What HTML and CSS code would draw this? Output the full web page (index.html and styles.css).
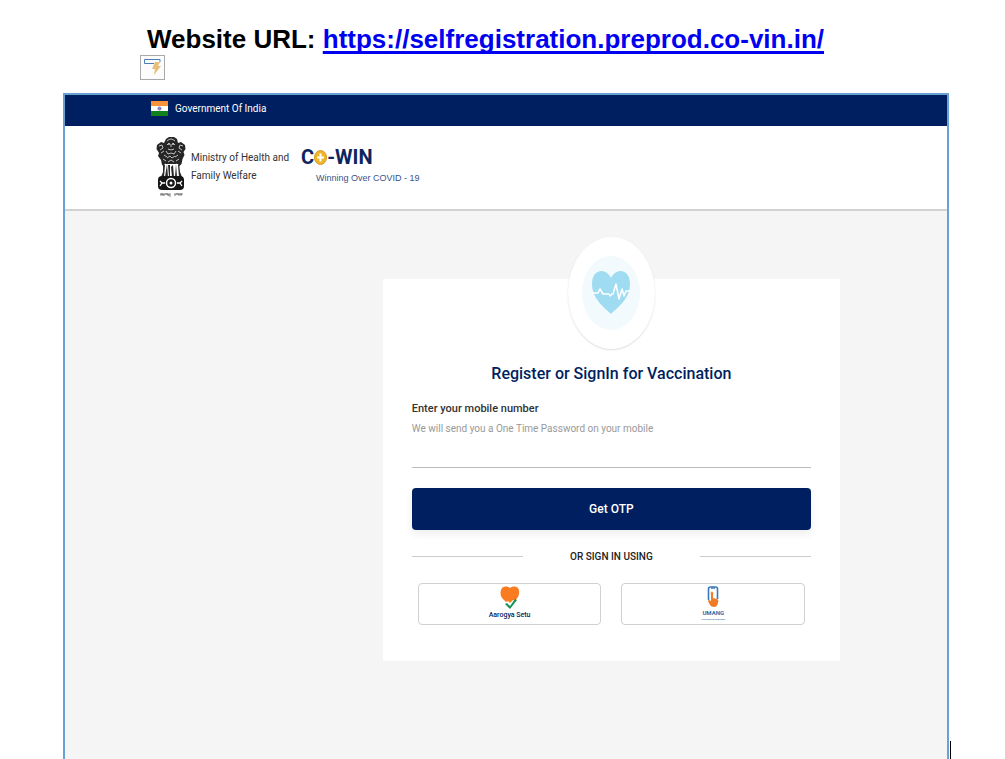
FILE: index.html
```
<!DOCTYPE html>
<html lang="en">

<head>
    <meta charset="UTF-8">
    <meta name="viewport" content="width=device-width, initial-scale=1.0">
    <title>Co-WIN Self Registration</title>
    <link rel="stylesheet" href="styles.css">
</head>

<body>

    <div class="doc-heading">
        <h1>Website URL: <a href="https://selfregistration.preprod.co-vin.in/">https://selfregistration.preprod.co-vin.in/</a></h1>
        <button class="autofit" type="button" aria-label="AutoFit options">
            <svg width="23" height="23" viewBox="0 0 23 23">
                <path d="M13 7.500H3.500V3.500H19V6" fill="none" stroke="#4a7ebb" />
                <path d="M14 6h5l-2 4h3l-7 9 1-6h-3z" fill="#e8bf78" />
            </svg>
        </button>
    </div>

    <div class="frame">
        <header>
            <div class="gov-bar">
                <svg class="flag" width="17" height="15" viewBox="0 0 17 15">
                    <rect width="17" height="5" fill="#f7933b" />
                    <rect y="5" width="17" height="5" fill="#fff" />
                    <rect y="10" width="17" height="5" fill="#138020" />
                    <circle cx="8.500" cy="7.500" r="1.600" fill="#8d8fc4" stroke="#4b4f9c" stroke-width=".6" />
                </svg>
                <span>Government Of India</span>
            </div>

            <div class="brand-bar">
                <svg class="emblem" width="30" height="62" viewBox="0 0 30 62">
                    <!-- three lions -->
                    <path d="M10 3l3-2h5l3 2 1 4 3-1 4 3 .5 4-2 3 1 3-2 4-1 5-3 3H9l-3-2-1-5-3-4 1-3L.5 13 1 9l4-3 3 1z" fill="#262626" />
                    <path d="M11 5q4-4 8 0M11 9q1-2 3-1m2 0q2-1 3 1M12 13q3 2 6 0M15 8v3M3 10l3-1 1 3-3 2m23-4-3-1-1 3 3 2M5 17l3-2m17 2-3-2M10 15l2 3 3-1 3 1 2-3M8 19l3 2m11-2-3 2M11 22l3-2 2 2 3-2M7 23l3 2m13-2-3 2M12 26l3-2 3 2M9 28l2 1m10-1-2 1" fill="none" stroke="#e4e4e4" stroke-width=".8" />
                    <circle cx="13" cy="8" r=".8" fill="#fff" />
                    <circle cx="17" cy="8" r=".8" fill="#fff" />
                    <!-- legs -->
                    <path d="M7 28h16l1 13H6z" fill="#fff" />
                    <path d="M7 27l2 2-1 12H5l2-5zM11 28l1 13H9zM14 29v12h-1l-1-12zM17 29l1 12h-2l-1-10zM20 28l1 13h-2zM23 27l-1 2 1 12h3l-2-5z" fill="#282828" />
                    <!-- abacus with the wheel -->
                    <rect x="2" y="40" width="26" height="14" rx="4" fill="#151515" />
                    <circle cx="15" cy="47" r="4.500" fill="none" stroke="#fff" stroke-width="1.500" />
                    <circle cx="15" cy="47" r="1.500" fill="#fff" />
                    <path d="M4 45l2 2-2 3m1-3h4m17-2-2 2 2 3m-1-3h-4" fill="none" stroke="#fff" stroke-width="1.300" />
                    <path d="M5 60v-2h2v2m1-2v2m1-2h3v2m1-2v2h2m4-2v2m1-2h3v2m1-2h3m-2 0v2M4 58h11m3 0h8" fill="none" stroke="#555" stroke-width=".7" />
                </svg>
                <p class="ministry">Ministry of Health and<br>Family Welfare</p>
                <div class="cowin">
                    <div class="cowin-name">C<svg width="13" height="15" viewBox="0 0 13 15" role="img" aria-label="o">
                            <ellipse cx="6.500" cy="7.500" rx="6" ry="7" fill="#eeb52c" stroke="#d79b20" />
                            <path d="M6.500 3.500v8M3 7.500h7" stroke="#fff" stroke-width="2" />
                        </svg>-WIN</div>
                    <div class="cowin-tag">Winning Over COVID - 19</div>
                </div>
            </div>
        </header>

        <main>
            <form class="card">
                <div class="badge">
                    <svg width="58" height="74" viewBox="0 0 58 74">
                        <ellipse cx="29" cy="37" rx="29" ry="37" fill="#f2fafd" />
                        <path d="M29 58C23 52 10 43 10 28c0-8 4-13 9.500-13 4 0 7.500 3 9.500 7 2-4 5.500-7 9.500-7C44 15 48 20 48 28c0 15-13 24-19 30z" fill="#a0dcf1" />
                        <path d="M10 37h6l2-4 3 5h6l1 2 2-2h1l3-10 3 15 3-10 2 7 2-5h4" fill="none" stroke="#fff" stroke-width="1.500" stroke-linejoin="round" />
                    </svg>
                </div>

                <h2>Register or SignIn for Vaccination</h2>

                <label for="mobile">Enter your mobile number</label>
                <p class="hint" id="hint">We will send you a One Time Password on your mobile</p>
                <input type="tel" id="mobile" aria-describedby="hint">

                <button class="otp" type="button">Get OTP</button>

                <div class="divider"><span>OR SIGN IN USING</span></div>

                <div class="providers">
                    <button class="provider" type="button">
                        <svg width="20" height="24" viewBox="0 0 20 24">
                            <path d="M10 2C12 0 16 0 18 2c2 3 1 7 0 9l-3 4-2-1-3 3-2-2-2 1-4-4C0 9 0 5 2 2c2-2 6-2 8 0z" fill="#f97d20" />
                            <path d="M5 18l2-1 3 3 5-7 2 1-7 9z" fill="#179257" />
                        </svg>
                        <span>Aarogya Setu</span>
                    </button>
                    <button class="provider umang" type="button">
                        <svg width="12" height="22" viewBox="0 0 12 22">
                            <path d="M1.500 14V3q0-2 2-2h5q2 0 2 2v10" fill="none" stroke="#3b78b8" stroke-width="1.600" />
                            <path d="M4 2h4" stroke="#3b78b8" stroke-width="1.500" />
                            <circle cx="5" cy="7" r="1.600" fill="#f9b183" />
                            <path d="M4 7q1-1.500 2 0v5l4 1q2 1 1 4-1 4-4 4-3 0-4-2l-2-4q0-1 1-1l2 1z" fill="#f17a25" />
                        </svg>
                        <span>UMANG</span>
                        <small>THE SPIRIT OF NEW INDIA</small>
                    </button>
                </div>
            </form>
        </main>
    </div>

    <div class="caret"></div>

</body>

</html>
```
FILE: styles.css
```
* {
    box-sizing: border-box;
}

body {
    position: relative;
    display: flex;
    flex-direction: column;
    min-height: 100vh;
    margin: 0;
    background-color: #fff;
    font-family: Roboto, Arial, sans-serif;
}

h1,
h2,
p {
    margin: 0;
}

button {
    font-family: inherit;
    cursor: pointer;
}

svg {
    display: block;
}

/* Document heading */
.doc-heading {
    padding: 24px 0 13px 140px;
}

h1 {
    padding-left: 7px;
    font: bold 26px/30px "Liberation Sans", Arial, sans-serif;
    color: #000;
}

h1 a {
    color: #0000f0;
    text-decoration-thickness: 3px;
    text-underline-offset: 3px;
    text-decoration-skip-ink: none;
}

.autofit {
    display: block;
    margin-top: 1px;
    padding: 0;
    border: 1px solid #aaa;
    background-color: #fcfcfc;
}

/* Screen */
.frame {
    flex: 1;
    display: flex;
    flex-direction: column;
    margin: 0 56px 0 63px;
    border: 2px solid #68a2d4;
    border-bottom: 0;
}

.gov-bar {
    display: flex;
    align-items: center;
    gap: 7px;
    height: 31px;
    padding: 0 86px 4px;
    background-color: #001f60;
    color: #fff;
    font-size: 10px;
}

.brand-bar {
    display: flex;
    align-items: flex-start;
    height: 85px;
    padding: 10px 91px 0;
    border-bottom: 2px solid #d2d2d2;
    background-color: #fff;
}

.ministry {
    margin: 13px 12px 0 5px;
    font-size: 10px;
    line-height: 18px;
    color: #333;
}

.cowin {
    padding-top: 8px;
}

.cowin-name {
    display: flex;
    align-items: center;
    font-size: 20px;
    font-weight: bold;
    line-height: 26px;
    color: #0c2460;
}

.cowin-tag {
    margin-left: 15px;
    font: 9px/16px "Liberation Sans", Arial, sans-serif;
    color: #3d5288;
}

main {
    flex: 1;
    padding: 68px 107px 24px 0;
    background-color: #f5f5f5;
}

/* Sign in card */
.card {
    display: flex;
    flex-direction: column;
    width: 59%;
    margin-left: auto;
    padding: 0 29px 36px;
    background-color: #fff;
}

.badge {
    display: flex;
    align-items: center;
    justify-content: center;
    align-self: center;
    width: 87px;
    height: 112px;
    margin-top: -42px;
    border-radius: 50%;
    background-color: #fff;
    box-shadow: 0 1px 2px #ddd;
}

h2 {
    margin: 13px 0;
    font-size: 16px;
    font-weight: 500;
    line-height: 24px;
    text-align: center;
    color: #001f60;
}

label {
    font-size: 11px;
    font-weight: 500;
    line-height: 20px;
    color: #333;
}

.hint {
    font-size: 10px;
    line-height: 20px;
    color: #999;
}

input {
    width: 100%;
    height: 29px;
    padding: 0;
    border: 0;
    border-bottom: 1px solid #bbb;
    outline: 0;
    background-color: transparent;
    font-size: 12px;
}

.otp {
    height: 42px;
    margin-top: 20px;
    padding: 0;
    border: 0;
    border-radius: 4px;
    background-color: #001f60;
    box-shadow: 0 4px 8px #eee;
    color: #fff;
    font-size: 12px;
    font-weight: 500;
}

.divider {
    display: flex;
    align-items: center;
    justify-content: space-between;
    margin: 16px 0;
    font-size: 10px;
    font-weight: 500;
    line-height: 21px;
    color: #222;
}

.divider::before,
.divider::after {
    content: "";
    width: 111px;
    border-top: 1px solid #ccc;
}

.providers {
    display: grid;
    grid-template-columns: 1fr 1fr;
    gap: 20px;
    padding: 0 6px;
}

.provider {
    display: flex;
    flex-direction: column;
    align-items: center;
    height: 42px;
    padding: 2px 0 0;
    border: 1px solid #d0d0d0;
    border-radius: 4px;
    background-color: #fff;
    color: #001f60;
    font-size: 7px;
    font-weight: 500;
    line-height: 10px;
}

.umang {
    color: #2f6cab;
    font-size: 6px;
    font-weight: bold;
}

.umang small {
    font-size: 2px;
    line-height: 3px;
}

/* Text cursor of the document */
.caret {
    position: absolute;
    right: 54px;
    bottom: 0;
    width: 1px;
    height: 18px;
    background-color: #000;
}
```
